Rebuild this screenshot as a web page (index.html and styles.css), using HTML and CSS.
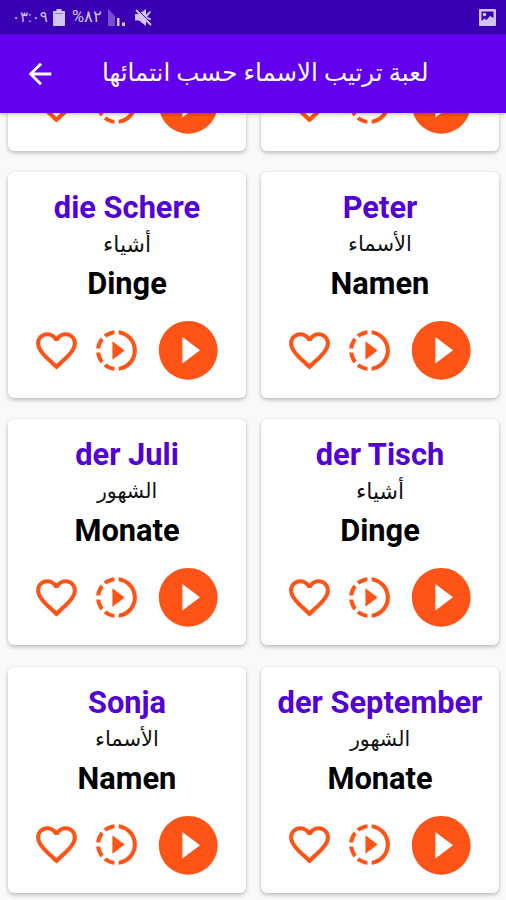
FILE: index.html
```
<!DOCTYPE html>
<html lang="ar">
	<head>
		<meta charset="utf-8">
		<title>لعبة ترتيب الاسماء حسب انتمائها</title>
		<link rel="stylesheet" href="styles.css">
	</head>
	<body>
		<svg class="defs" aria-hidden="true">
			<symbol id="heart" viewBox="0 0 24 24"><path d="M16.5 3c-1.74 0-3.41.81-4.5 2.09C10.91 3.81 9.24 3 7.5 3 4.42 3 2 5.42 2 8.5c0 3.78 3.4 6.86 8.55 11.54L12 21.35l1.45-1.32C18.6 15.36 22 12.28 22 8.5 22 5.42 19.58 3 16.5 3zm-4.4 15.55l-.1.1-.1-.1C7.14 14.24 4 11.39 4 8.5 4 6.5 5.5 5 7.5 5c1.54 0 3.04.99 3.57 2.36h1.87C13.46 5.99 14.96 5 16.5 5c2 0 3.5 1.5 3.5 3.5 0 2.89-3.14 5.74-7.9 10.05z"/></symbol>
			<symbol id="slow" viewBox="0 0 24 24"><path d="M10 7.5v9l6-4.5zM11 4.07V2.05c-2.01.2-3.84 1-5.32 2.21L7.1 5.69c1.11-.86 2.44-1.44 3.9-1.62zM5.69 7.1L4.26 5.68C3.05 7.16 2.25 8.99 2.05 11h2.02c.18-1.46.76-2.79 1.62-3.9zM4.07 13H2.05c.2 2.01 1 3.84 2.21 5.32l1.43-1.43c-.86-1.1-1.44-2.43-1.62-3.89zm1.61 6.74C7.16 20.95 9 21.75 11 21.95v-2.02c-1.46-.18-2.79-.76-3.9-1.62l-1.42 1.43zM22 12c0 5.16-3.92 9.42-8.95 9.95v-2.02C16.97 19.41 20 16.05 20 12s-3.03-7.41-6.95-7.93V2.05C18.08 2.58 22 6.84 22 12z"/></symbol>
			<symbol id="play" viewBox="0 0 24 24"><path d="M12 2C6.48 2 2 6.48 2 12s4.48 10 10 10 10-4.48 10-10S17.52 2 12 2zm-2 14.5v-9l6 4.5-6 4.5z"/></symbol>
		</svg>

		<div class="status">
			<span class="clock">٠٣:٠٩</span>
			<svg class="battery" viewBox="0 0 12 17"><path d="M3.5 0h5v2H11a1 1 0 0 1 1 1v13a1 1 0 0 1-1 1H1a1 1 0 0 1-1-1V3a1 1 0 0 1 1-1h2.5z"/><path class="line" d="M2 4.5h8"/></svg>
			<span class="percent">%٨٢</span>
			<svg class="signal" viewBox="0 0 18 17"><path class="dim" d="M0 0l7 7v10H0z"/><path d="M9 9h2.500v8H9zM14 13.500h3v3.500h-3z"/></svg>
			<svg class="mute" viewBox="0 0 17 17"><path d="M0 5h4L11 0v5.500L15 2l1 1-4 5 4 1.500V11l-5-1v7L4 11.500H0z"/><path class="gap" d="M2 0l15 15"/><path class="slash" d="M1 1l15 15"/></svg>
			<svg class="photo" viewBox="0 0 17 17"><path fill-rule="evenodd" d="M1 0h15a1 1 0 0 1 1 1v15a1 1 0 0 1-1 1H1a1 1 0 0 1-1-1V1a1 1 0 0 1 1-1zM2.500 2.500V12l3-2.500 2 1.500L11 7l3.500 2V2.500z"/><circle cx="5.500" cy="5.500" r="1.800"/></svg>
		</div>

		<div class="appbar">
			<svg class="back" viewBox="0 0 24 24"><path d="M20 11H7.83l5.59-5.59L12 4l-8 8 8 8 1.41-1.41L7.83 13H20v-2z"/></svg>
			<h1 dir="rtl">لعبة ترتيب الاسماء حسب انتمائها</h1>
		</div>

		<div class="list">
			<div class="card scrolled">
				<div class="actions"><svg><use href="#heart"/></svg><svg><use href="#slow"/></svg><svg class="big"><use href="#play"/></svg></div>
			</div>
			<div class="card scrolled">
				<div class="actions"><svg><use href="#heart"/></svg><svg><use href="#slow"/></svg><svg class="big"><use href="#play"/></svg></div>
			</div>
			<div class="card">
				<h2>die Schere</h2>
				<p class="arabic things" dir="rtl">أشياء</p>
				<h3>Dinge</h3>
				<div class="actions"><svg><use href="#heart"/></svg><svg><use href="#slow"/></svg><svg class="big"><use href="#play"/></svg></div>
			</div>
			<div class="card">
				<h2>Peter</h2>
				<p class="arabic names" dir="rtl">الأسماء</p>
				<h3>Namen</h3>
				<div class="actions"><svg><use href="#heart"/></svg><svg><use href="#slow"/></svg><svg class="big"><use href="#play"/></svg></div>
			</div>
			<div class="card">
				<h2>der Juli</h2>
				<p class="arabic months" dir="rtl">الشهور</p>
				<h3>Monate</h3>
				<div class="actions"><svg><use href="#heart"/></svg><svg><use href="#slow"/></svg><svg class="big"><use href="#play"/></svg></div>
			</div>
			<div class="card">
				<h2>der Tisch</h2>
				<p class="arabic things" dir="rtl">أشياء</p>
				<h3>Dinge</h3>
				<div class="actions"><svg><use href="#heart"/></svg><svg><use href="#slow"/></svg><svg class="big"><use href="#play"/></svg></div>
			</div>
			<div class="card">
				<h2>Sonja</h2>
				<p class="arabic names" dir="rtl">الأسماء</p>
				<h3>Namen</h3>
				<div class="actions"><svg><use href="#heart"/></svg><svg><use href="#slow"/></svg><svg class="big"><use href="#play"/></svg></div>
			</div>
			<div class="card">
				<h2>der September</h2>
				<p class="arabic months" dir="rtl">الشهور</p>
				<h3>Monate</h3>
				<div class="actions"><svg><use href="#heart"/></svg><svg><use href="#slow"/></svg><svg class="big"><use href="#play"/></svg></div>
			</div>
		</div>
	</body>
</html>
```
FILE: styles.css
```
html, body {
	margin: 0;
	height: 900px;
	overflow: hidden;
}
body {
	display: flex;
	flex-direction: column;
	background-color: #f9f9f9;
	font-family: Roboto, "DejaVu Sans", sans-serif;
}
h1, h2, h3, p {
	margin: 0;
}
svg {
	display: block;
	flex: none;
	fill: currentColor;
}
.defs {
	display: none;
}
.status {
	display: flex;
	align-items: center;
	box-sizing: border-box;
	height: 34px;
	flex: none;
	padding: 0 10px 0 12px;
	background-color: #3900b3;
	color: #d3c5f3;
	font-size: 15px;
	line-height: 34px;
}
.clock {
	width: 41px;
	white-space: nowrap;
}
.battery {
	width: 12px;
	height: 17px;
}
.line {
	stroke: #3900b3;
	opacity: 0.4;
}
.percent {
	width: 29px;
	margin-left: 7px;
	font-size: 16.500px;
	white-space: nowrap;
	direction: ltr;
	unicode-bidi: bidi-override;
}
.signal {
	width: 18px;
	height: 17px;
	margin-left: 7px;
}
.dim {
	opacity: 0.4;
}
.mute {
	width: 17px;
	height: 17px;
	margin-left: 9px;
}
.slash {
	stroke: currentColor;
	stroke-width: 2;
}
.gap {
	stroke: #3900b3;
	stroke-width: 1;
}
.photo {
	width: 17px;
	height: 17px;
	margin-left: auto;
}
.appbar {
	display: flex;
	align-items: center;
	height: 79px;
	flex: none;
	padding-left: 23px;
	background-color: #6200ee;
	color: white;
	z-index: 1;
	box-shadow: 0 1px 4px rgba(0, 0, 0, 0.3);
}
.back {
	width: 34px;
	height: 34px;
}
h1 {
	margin-left: 45px;
	padding-bottom: 2px;
	font-size: 24.500px;
	font-weight: normal;
	line-height: 40px;
	white-space: nowrap;
}
.list {
	display: grid;
	grid-template-columns: 238px 238px;
	grid-template-rows: 38px 226px 226px 226px;
	column-gap: 15px;
	row-gap: 21.200px;
	padding-left: 8px;
}
.card {
	display: flex;
	flex-direction: column;
	align-items: center;
	box-sizing: border-box;
	padding-top: 17px;
	background-color: white;
	border-radius: 6px;
	box-shadow: 0 2px 4px rgba(0, 0, 0, 0.24), 0 0 2px rgba(0, 0, 0, 0.06);
}
.scrolled {
	justify-content: flex-end;
	padding: 0 0 12px;
	border-radius: 0 0 6px 6px;
}
h2, h3 {
	font-size: 30.800px;
	font-weight: bold;
	line-height: 38px;
	white-space: nowrap;
}
h2 {
	color: #5200d6;
}
h3 {
	color: black;
}
.arabic {
	height: 38px;
	color: #111;
	font-size: 22px;
	line-height: 35px;
}
.names {
	font-size: 21px;
}
.months {
	font-size: 20.500px;
}
.actions {
	display: flex;
	align-items: center;
	gap: 11.500px;
	margin-top: 12px;
	padding-left: 1px;
	color: #ff5417;
}
.actions svg {
	width: 49px;
	height: 49px;
}
.actions .big {
	width: 70.500px;
	height: 70.500px;
}
```
